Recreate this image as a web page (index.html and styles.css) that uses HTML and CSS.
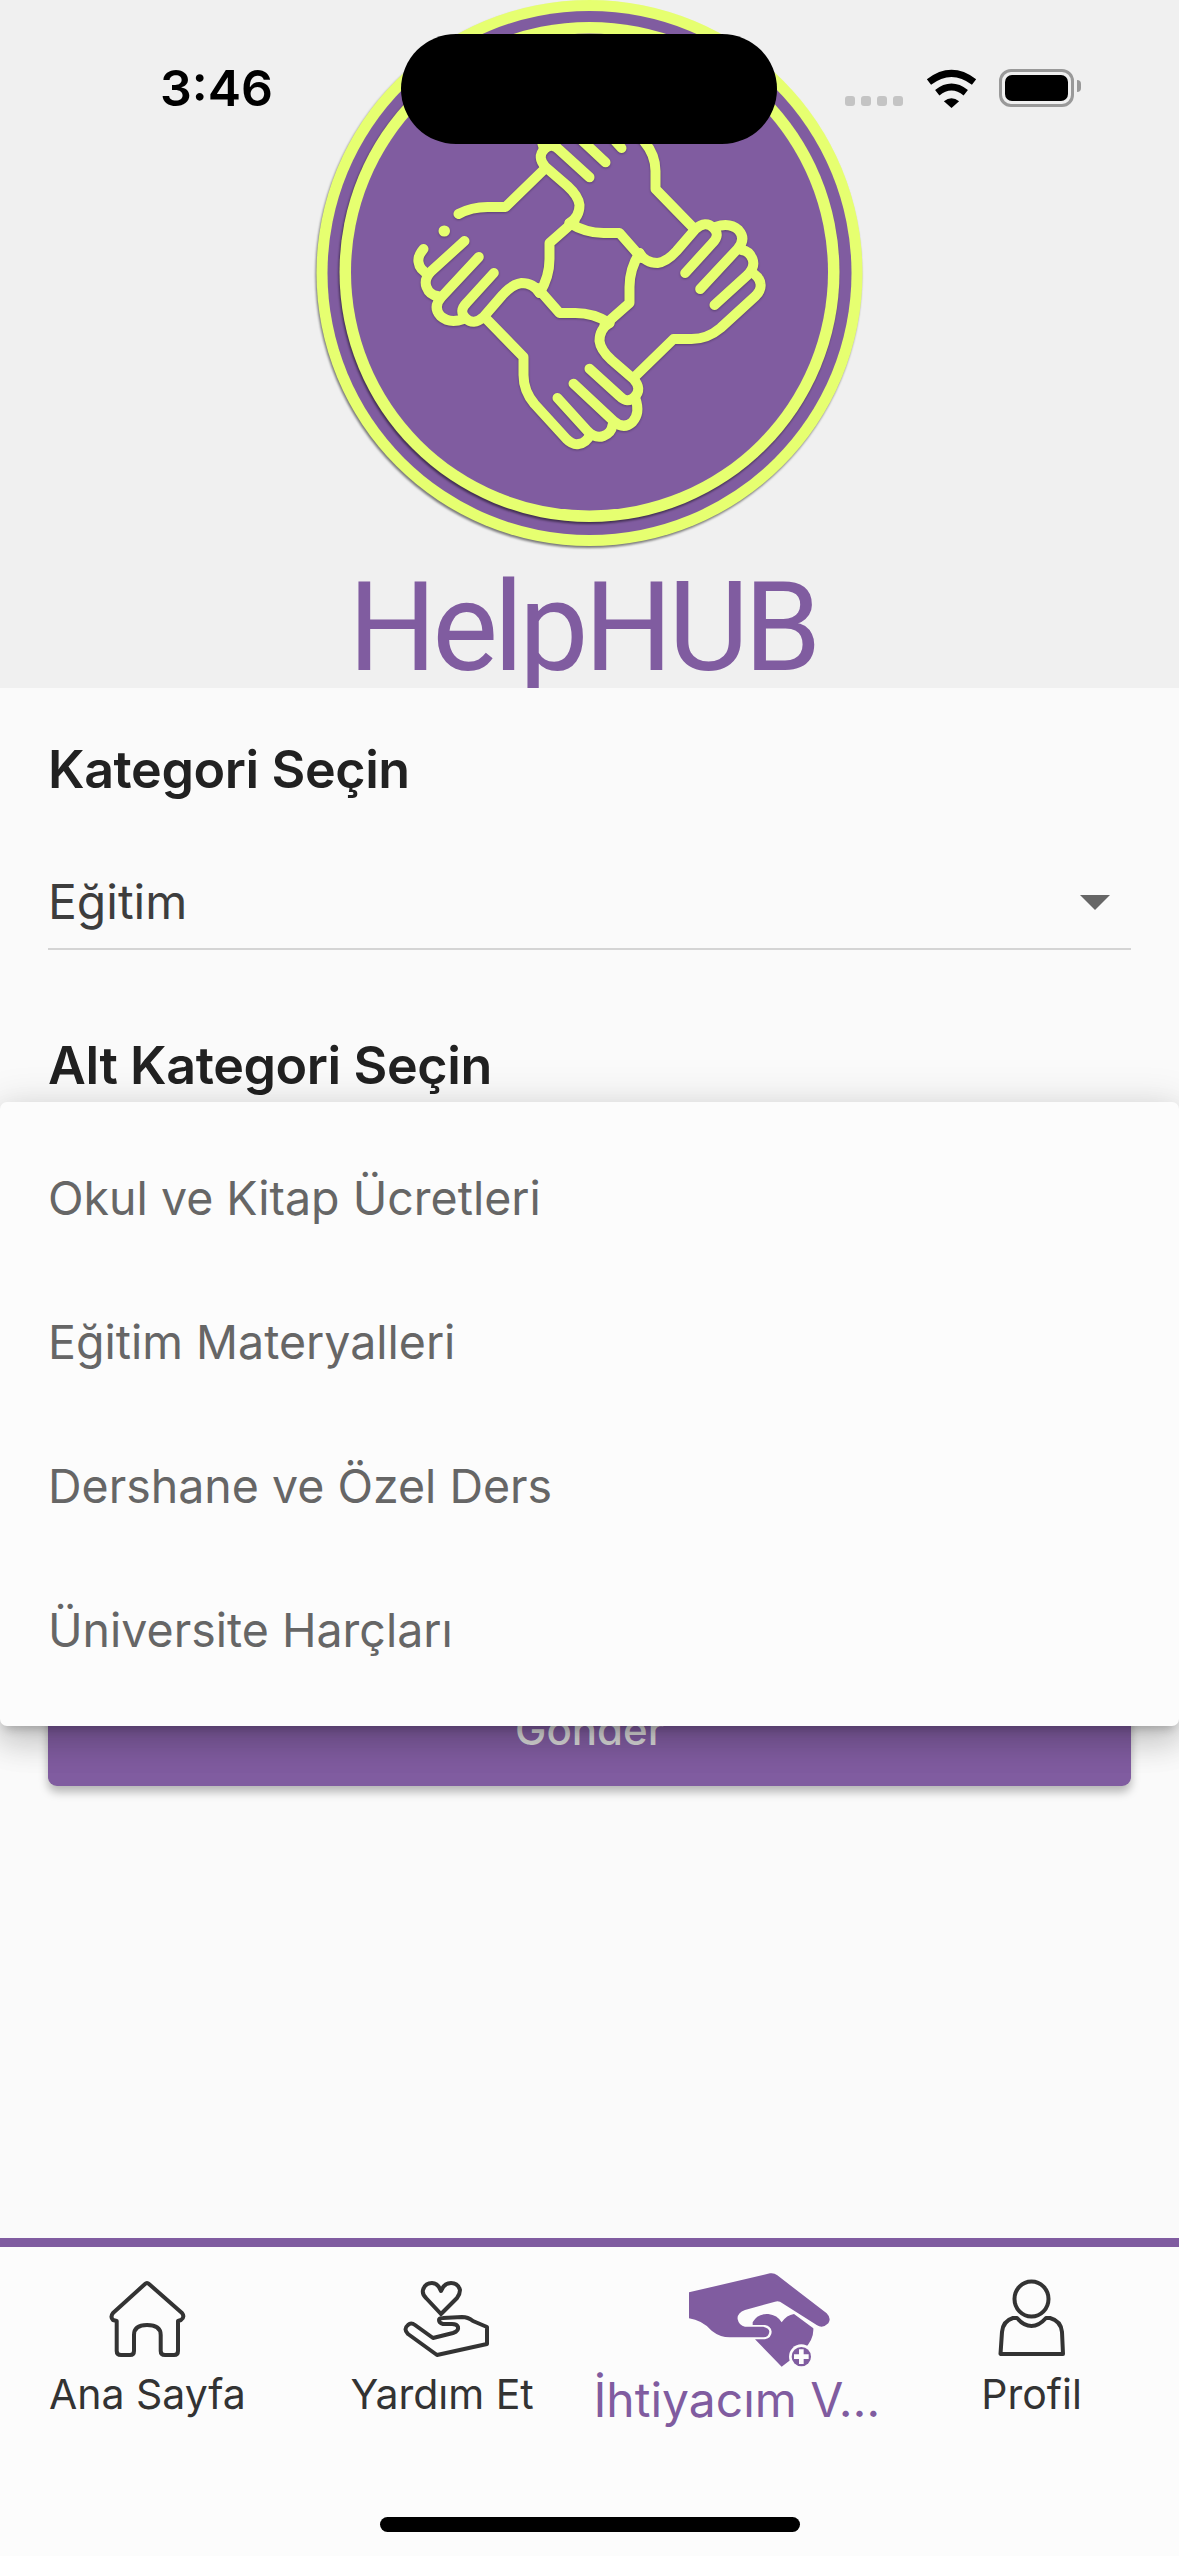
FILE: index.html
```html
<!DOCTYPE html>
<html lang="tr">
<head>
<meta charset="utf-8">
<title>HelpHUB</title>
<link rel="stylesheet" href="styles.css">
</head>
<body>
<div class="screen">
  <header class="brand">
    <svg class="logo" viewBox="-273.5 -273 547 547" aria-hidden="true">
      <defs>
        <g id="hand">
          <path d="M50-20Q56-10 68-10Q77-11 87-22L106-44Q116-53 124-45Q131-38 123-30L95.7 0"/>
          <path d="M126-46Q140-51 149-43Q157-34 148-24L110.7 16"/>
          <path d="M152-23Q160-22 163-14Q166-6 158 2L125 32"/>
          <path d="M50-20Q40-4 40 14L40 30L15 52"/>
        </g>
        <path id="edge" d="M161-1Q170 3 171 11Q172 17 166 23L131 55Q118 66 102 66L84 66L45 104"/>
      </defs>
      <circle class="ring-y shadowed" r="273"/>
      <circle class="ring-p" r="262"/>
      <circle class="ring-y shadowed" r="250" cy="-1"/>
      <circle class="ring-p" r="238.5" cy="-1"/>
      <g class="hands">
        <use href="#hand"/><use href="#edge"/>
        <use href="#hand" transform="rotate(90)"/><use href="#edge" transform="rotate(90)"/>
        <use href="#hand" transform="rotate(180)"/>
        <path d="M-45-104L-84-66L-102-66Q-118-66-131-59"/>
        <path d="M-161 1Q-170-3-171-11Q-172-17-166-24"/>
        <path class="dot" d="M-145.500-42L-145-42"/>
        <use href="#hand" transform="rotate(270)"/><use href="#edge" transform="rotate(270)"/>
      </g>
    </svg>
    <div class="wordmark">HelpHUB</div>
  </header>

  <main class="form">
    <h2 class="label first">Kategori Seçin</h2>
    <div class="select">
      <span>Eğitim</span>
      <i class="caret"></i>
    </div>
    <h2 class="label second">Alt Kategori Seçin</h2>
    <div class="covered"></div>
    <button class="send" type="button">Gönder</button>
  </main>

  <nav class="tabs">
    <a class="tab">
      <svg class="ico" viewBox="0 0 84 84" width="84" height="84" aria-hidden="true">
        <path d="M11.700 44V74Q11.700 78 16 78H25Q29 78 29 74V58Q29 48 42 48Q55.700 48 55.700 58V74Q55.700 78 60 78H69Q73 78 73 74V44L76 43Q80 40 77 36L44 7Q42 5 40 7L8 36Q5 40 8 43Z"/>
      </svg>
      <span>Ana Sayfa</span>
    </a>
    <a class="tab">
      <svg class="ico nudge" viewBox="0 0 96 84" width="96" height="84" aria-hidden="true">
        <path d="M44 37L29 21Q25 17 26 13Q28 6 35 6Q41 6 44 14Q47 6 54 6Q61 6 63 13Q63 17 60 21Z"/>
        <path d="M42 43Q42 41 46 41L65 40Q71 40 76 44L90 50V67L40 78L11 57Q6 52 11 48Q14 45 18 48L36 61L56 56Q62 54 61 50Q60 47 55 47H46Q42 46 42 43Z"/>
      </svg>
      <span>Yardım Et</span>
    </a>
    <a class="tab active">
      <svg class="ico-active" viewBox="0 0 540 360" width="180" height="120" aria-hidden="true">
        <path class="fill" d="M57 97L300 40Q312 38 322 46L470 160Q485 175 475 190Q458 207 440 195L330 125Q322 122 315 125L225 150Q200 160 203 178Q207 197 225 200H280Q298 205 298 215Q296 232 280 232H180Q150 232 125 212Q95 180 57 175Z"/>
        <path class="fill" d="M248 187Q262 160 295 162Q322 165 335 187Q350 165 372 162L430 205Q432 240 400 270L335 320L255 238H285Q305 232 305 215Q303 198 285 195H248Z"/>
        <circle class="paper" cx="394" cy="290" r="37"/>
        <circle class="fill" cx="394" cy="290" r="29"/>
        <path class="paper" d="M387 268H401V283H416V297H401V312H387V297H372V283H387Z"/>
      </svg>
      <span>İhtiyacım V…</span>
    </a>
    <a class="tab">
      <svg class="ico" viewBox="0 0 74 84" width="74" height="84" aria-hidden="true">
        <ellipse cx="36.500" cy="22" rx="17" ry="17.500"/>
        <path d="M5.500 77H68L67 55Q66 44 55 41H51Q44 49 36.500 49Q29 49 22 41H18Q8 44 7 55Z"/>
      </svg>
      <span>Profil</span>
    </a>
  </nav>

  <div class="menu">
    <div class="option">Okul ve Kitap Ücretleri</div>
    <div class="option">Eğitim Materyalleri</div>
    <div class="option">Dershane ve Özel Ders</div>
    <div class="option">Üniversite Harçları</div>
  </div>

  <div class="status">
    <span class="time">3:46</span>
    <div class="notch"></div>
    <div class="indicators">
      <div class="signal"><i></i><i></i><i></i><i></i></div>
      <svg class="wifi" viewBox="360 72 190 135" width="63" height="45" aria-hidden="true">
        <path class="arc" d="M387 120Q455 68 523 120"/>
        <path class="arc" d="M412 152Q455 118 498 152"/>
        <path d="M432 178Q455 160 478 178L455 198Z"/>
      </svg>
      <div class="battery"><i></i></div>
    </div>
  </div>

  <div class="home-bar"></div>
</div>
</body>
</html>
```
FILE: styles.css
```css
* { box-sizing: border-box; }
html, body { margin: 0; padding: 0; }
body { font-family: Inter, Roboto, "Noto Sans", sans-serif; background: #fafafa; }

.screen {
  position: relative;
  width: 1179px;
  height: 2556px;
  overflow: hidden;
  display: flex;
  flex-direction: column;
  background: #fafafa;
}

/* header */
.brand {
  height: 688px;
  flex: none;
  background: #f0f0f0;
  display: flex;
  flex-direction: column;
  align-items: center;
}
.logo { width: 547px; height: 547px; display: block; flex: none; overflow: visible; }
.ring-y { fill: #e6ff70; }
.ring-p { fill: #805ca0; }
.shadowed { filter: drop-shadow(-1px 2px 1px rgba(0, 0, 0, .5)); }
.hands {
  fill: none;
  stroke: #e6ff70;
  stroke-width: 10;
  stroke-linecap: round;
  stroke-linejoin: round;
  filter: drop-shadow(0 1px 1px rgba(0, 0, 0, .3));
}
.hands .dot { stroke-width: 11; }
.wordmark {
  margin: 11px 14px 0 0;
  font-family: Roboto, sans-serif;
  font-size: 124px;
  font-weight: 400;
  line-height: 140px;
  letter-spacing: -4.500px;
  color: #805ca0;
}

/* form */
.form {
  position: relative;
  flex: 1;
  padding: 50px 48px 0;
  display: flex;
  flex-direction: column;
  background: #fafafa;
}
.label {
  margin: 0;
  font-size: 52px;
  line-height: 64px;
  font-weight: 600;
  letter-spacing: -.4px;
  color: #212121;
}
.second { margin-top: 84px; }
.select {
  margin-top: 68px;
  padding-bottom: 14px;
  border-bottom: 2px solid #d4d4d4;
  display: flex;
  align-items: center;
  justify-content: space-between;
  font-size: 48px;
  line-height: 64px;
  color: #3d3d3d;
}
.caret {
  width: 0;
  height: 0;
  margin-right: 21px;
  border-left: 15px solid transparent;
  border-right: 15px solid transparent;
  border-top: 15px solid #666;
}
.covered { height: 576px; flex: none; }
.send {
  height: 112px;
  flex: none;
  padding: 0;
  border: 0;
  border-radius: 9px;
  background: #805ca0;
  color: #d8d8d8;
  font: 500 42px/1 Inter, sans-serif;
  box-shadow: 0 6px 10px rgba(0, 0, 0, .28);
}

/* bottom tabs */
.tabs {
  height: 318px;
  flex: none;
  border-top: 9px solid #805ca0;
  display: grid;
  grid-template-columns: repeat(4, 1fr);
  background: #fcfcfc;
}
.tab {
  display: flex;
  flex-direction: column;
  align-items: center;
  padding-top: 30px;
  font-size: 41px;
  line-height: 50px;
  color: #333;
  white-space: nowrap;
}
.tab.active {
  padding-top: 13px;
  font-size: 48px;
  line-height: 56px;
  color: #805ca0;
}
.ico { display: block; margin-bottom: 8px; fill: none; stroke: #333; stroke-width: 4; stroke-linejoin: round; }
.nudge { margin-left: 6px; }
.ico-active { display: block; margin: 0 0 -8px 46px; }
.fill { fill: #805ca0; }
.paper { fill: #fcfcfc; }

/* open dropdown */
.menu {
  position: absolute;
  left: 0;
  right: 0;
  top: 1102px;
  padding: 24px 0;
  border-radius: 7px;
  background: #fcfcfc;
  box-shadow: 0 16px 32px 2px rgba(0, 0, 0, .14), 0 6px 40px 5px rgba(0, 0, 0, .12), 0 8px 10px -5px rgba(0, 0, 0, .2);
}
.option {
  height: 144px;
  padding: 0 48px;
  display: flex;
  align-items: center;
  font-size: 46.500px;
  color: #666;
}

/* system overlays */
.status {
  position: absolute;
  left: 0;
  right: 0;
  top: 0;
  height: 176px;
  padding: 0 105px 0 160px;
  display: flex;
  align-items: center;
  justify-content: space-between;
}
.time { font: 600 50px/1 Inter, "Liberation Sans", sans-serif; color: #000; }
.notch {
  position: absolute;
  left: 401px;
  top: 34px;
  width: 376px;
  height: 110px;
  border-radius: 55px;
  background: #000;
}
.indicators { display: flex; align-items: center; }
.signal { display: flex; gap: 6px; margin: 26px 17px 0 0; }
.signal i { width: 10px; height: 10px; border-radius: 3px; background: #c4c4c4; }
.wifi { display: block; margin-right: 16px; }
.arc { fill: none; stroke: #000; stroke-width: 21; }
.battery {
  position: relative;
  width: 75px;
  height: 38px;
  padding: 3px;
  border: 3px solid #999;
  border-radius: 12px;
}
.battery i { display: block; height: 100%; border-radius: 7px; background: #000; }
.battery::after {
  content: "";
  position: absolute;
  right: -10px;
  top: 8px;
  width: 4px;
  height: 12px;
  border-radius: 0 4px 4px 0;
  background: #999;
}
.home-bar {
  position: absolute;
  left: 380px;
  top: 2517px;
  width: 420px;
  height: 15px;
  border-radius: 8px;
  background: #000;
}
```
